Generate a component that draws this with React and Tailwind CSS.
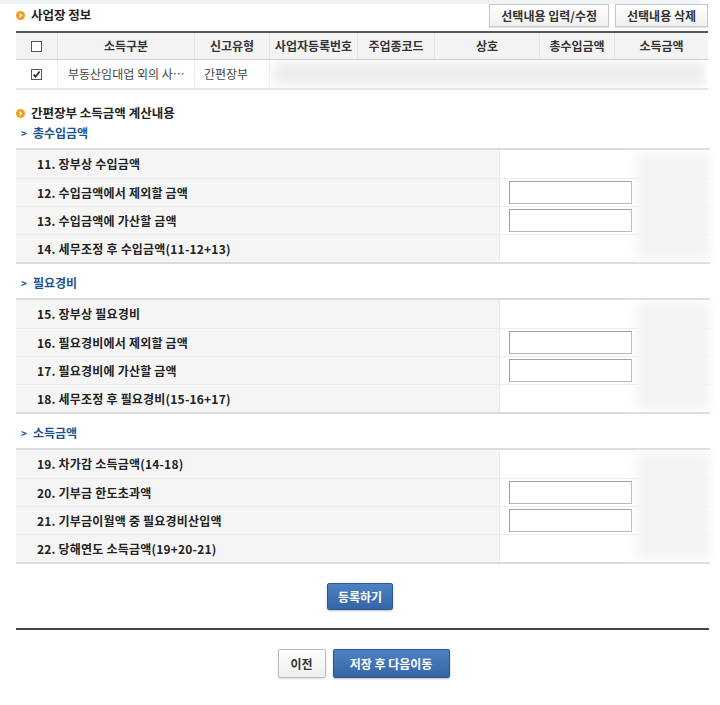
import React from "react";

const sections = [
  {
    title: "총수입금액",
    rows: [
      { label: "11. 장부상 수입금액", input: false },
      { label: "12. 수입금액에서 제외할 금액", input: true },
      { label: "13. 수입금액에 가산할 금액", input: true },
      { label: "14. 세무조정 후 수입금액(11-12+13)", input: false },
    ],
  },
  {
    title: "필요경비",
    rows: [
      { label: "15. 장부상 필요경비", input: false },
      { label: "16. 필요경비에서 제외할 금액", input: true },
      { label: "17. 필요경비에 가산할 금액", input: true },
      { label: "18. 세무조정 후 필요경비(15-16+17)", input: false },
    ],
  },
  {
    title: "소득금액",
    rows: [
      { label: "19. 차가감 소득금액(14-18)", input: false },
      { label: "20. 기부금 한도초과액", input: true },
      { label: "21. 기부금이월액 중 필요경비산입액", input: true },
      { label: "22. 당해연도 소득금액(19+20-21)", input: false },
    ],
  },
];

const columns = [
  { name: "소득구분", w: "w-[137px]" },
  { name: "신고유형", w: "w-[75px]" },
  { name: "사업자등록번호", w: "w-[88px]" },
  { name: "주업종코드", w: "w-[77px]" },
  { name: "상호", w: "w-[105px]" },
  { name: "총수입금액", w: "w-[75px]" },
  { name: "소득금액", w: "flex-1" },
];

function Bullet() {
  return (
    <span className="w-[9px] h-[9px] rounded-full bg-[#f0a020] flex items-center justify-center shrink-0">
      <svg width="5" height="5" viewBox="0 0 5 5">
        <path d="M1.5 0.8 L3.5 2.5 L1.5 4.2" stroke="#fff" strokeWidth="1.2" fill="none" />
      </svg>
    </span>
  );
}

function Checkbox({ checked }) {
  return (
    <span className="w-[11px] h-[11px] border border-[#555] bg-white flex items-center justify-center">
      {checked && (
        <svg width="9" height="9" viewBox="0 0 9 9">
          <path d="M1.5 4.5 L3.6 6.8 L7.6 1.6" stroke="#222" strokeWidth="1.6" fill="none" />
        </svg>
      )}
    </span>
  );
}

function GrayButton({ children }) {
  return (
    <button className="h-[23px] px-[11px] border border-[#c8c8c8] bg-gradient-to-b from-white to-[#f0f0f0] text-[12px] font-bold text-[#333] shadow-[0_1px_1px_rgba(0,0,0,0.1)]">
      {children}
    </button>
  );
}

function BlueButton({ children, className = "" }) {
  return (
    <button className={"border border-[#2b568e] rounded-[2px] bg-gradient-to-b from-[#4d82c4] to-[#3565a6] text-white text-[12px] font-bold shadow-[0_1px_2px_rgba(0,0,0,0.25)] " + className}>
      {children}
    </button>
  );
}

function CalcSection({ title, rows }) {
  return (
    <div>
      <div className="h-[20px] pl-[21px] flex items-center gap-[6px] text-[#1b5391] font-bold text-[12px]">
        <span className="text-[10px]">&gt;</span>
        <span>{title}</span>
      </div>
      <div className="relative mt-[5px] ml-[16px] w-[694px] border-t-2 border-b-2 border-[#dcdcdc]">
        {rows.map((r, i) => (
          <div key={i} className={"flex h-[28px] " + (i > 0 ? "border-t border-[#ececec]" : "")}>
            <div className="w-[484px] bg-[#f5f5f5] border-r border-[#eaeaea] flex items-center pl-[21px] font-bold text-[12px] tracking-[0.2px] text-[#222]">
              {r.label}
            </div>
            <div className="flex-1 bg-white flex items-center pl-[9px]">
              {r.input && (
                <input className="w-[123px] h-[23px] border border-[#b5b5b5] border-t-[#a0a0a0] border-l-[#a0a0a0] bg-white outline-none" />
              )}
            </div>
          </div>
        ))}
        <div className="absolute right-0 top-[4px] bottom-[4px] w-[74px] bg-[#f3f3f3] blur-[5px]" />
      </div>
    </div>
  );
}

export default function App() {
  return (
    <div className="w-[720px] h-[705px] bg-white font-['Noto_Sans_CJK_KR','Noto_Sans',sans-serif] text-[12px] text-[#333] leading-none">
      <div className="h-[4px] w-[700px] bg-[#eef3f8]" />

      <div className="flex items-center justify-between pl-[16px] pr-[12px] h-[23px]">
        <div className="flex items-center gap-[6px] font-bold text-[12.5px] text-[#222]">
          <Bullet />
          <span>사업장 정보</span>
        </div>
        <div className="flex gap-[6px]">
          <GrayButton>선택내용 입력/수정</GrayButton>
          <GrayButton>선택내용 삭제</GrayButton>
        </div>
      </div>

      <div className="mt-[4px] ml-[16px] w-[692px] border-t-2 border-[#555] border-b-2 border-b-[#e4e4e4]">
        <div className="flex h-[27px] bg-[#f3f3f3] border-b border-[#cfcfcf] font-bold text-[12px] text-[#333]">
          <div className="w-[42px] flex items-center justify-center border-r border-[#e6e6e6]">
            <Checkbox />
          </div>
          {columns.map((c, i) => (
            <div key={i} className={c.w + " flex items-center justify-center " + (i < columns.length - 1 ? "border-r border-[#e6e6e6]" : "")}>
              {c.name}
            </div>
          ))}
        </div>
        <div className="flex h-[28px] bg-white text-[12px] text-[#444]">
          <div className="w-[42px] flex items-center justify-center border-r border-[#eee]">
            <Checkbox checked />
          </div>
          <div className="w-[137px] flex items-center pl-[10px] border-r border-[#eee] whitespace-nowrap overflow-hidden">
            부동산임대업 외의 사…
          </div>
          <div className="w-[75px] flex items-center pl-[9px] border-r border-[#eee]">간편장부</div>
          <div className="flex-1 relative overflow-hidden">
            <div className="absolute inset-[3px] bg-[#ececec] blur-[6px]" />
          </div>
        </div>
      </div>

      <div className="mt-[15px] h-[16px] pl-[16px] flex items-center gap-[6px] font-bold text-[12.5px] text-[#222]">
        <Bullet />
        <span>간편장부 소득금액 계산내용</span>
      </div>

      <div className="mt-[2px]">
        <CalcSection {...sections[0]} />
      </div>
      <div className="mt-[9px]">
        <CalcSection {...sections[1]} />
      </div>
      <div className="mt-[9px]">
        <CalcSection {...sections[2]} />
      </div>

      <div className="flex justify-center mt-[19px]">
        <BlueButton className="w-[66px] h-[27px]">등록하기</BlueButton>
      </div>

      <div className="mt-[18px] ml-[16px] w-[693px] h-[2px] bg-[#444]" />

      <div className="flex justify-center gap-[7px] mt-[19px] pl-[7px]">
        <button className="w-[48px] h-[29px] border border-[#bbb] rounded-[2px] bg-gradient-to-b from-white to-[#eee] text-[12px] font-bold text-[#333] shadow-[0_1px_2px_rgba(0,0,0,0.15)]">
          이전
        </button>
        <BlueButton className="w-[117px] h-[29px]">저장 후 다음이동</BlueButton>
      </div>
    </div>
  );
}
